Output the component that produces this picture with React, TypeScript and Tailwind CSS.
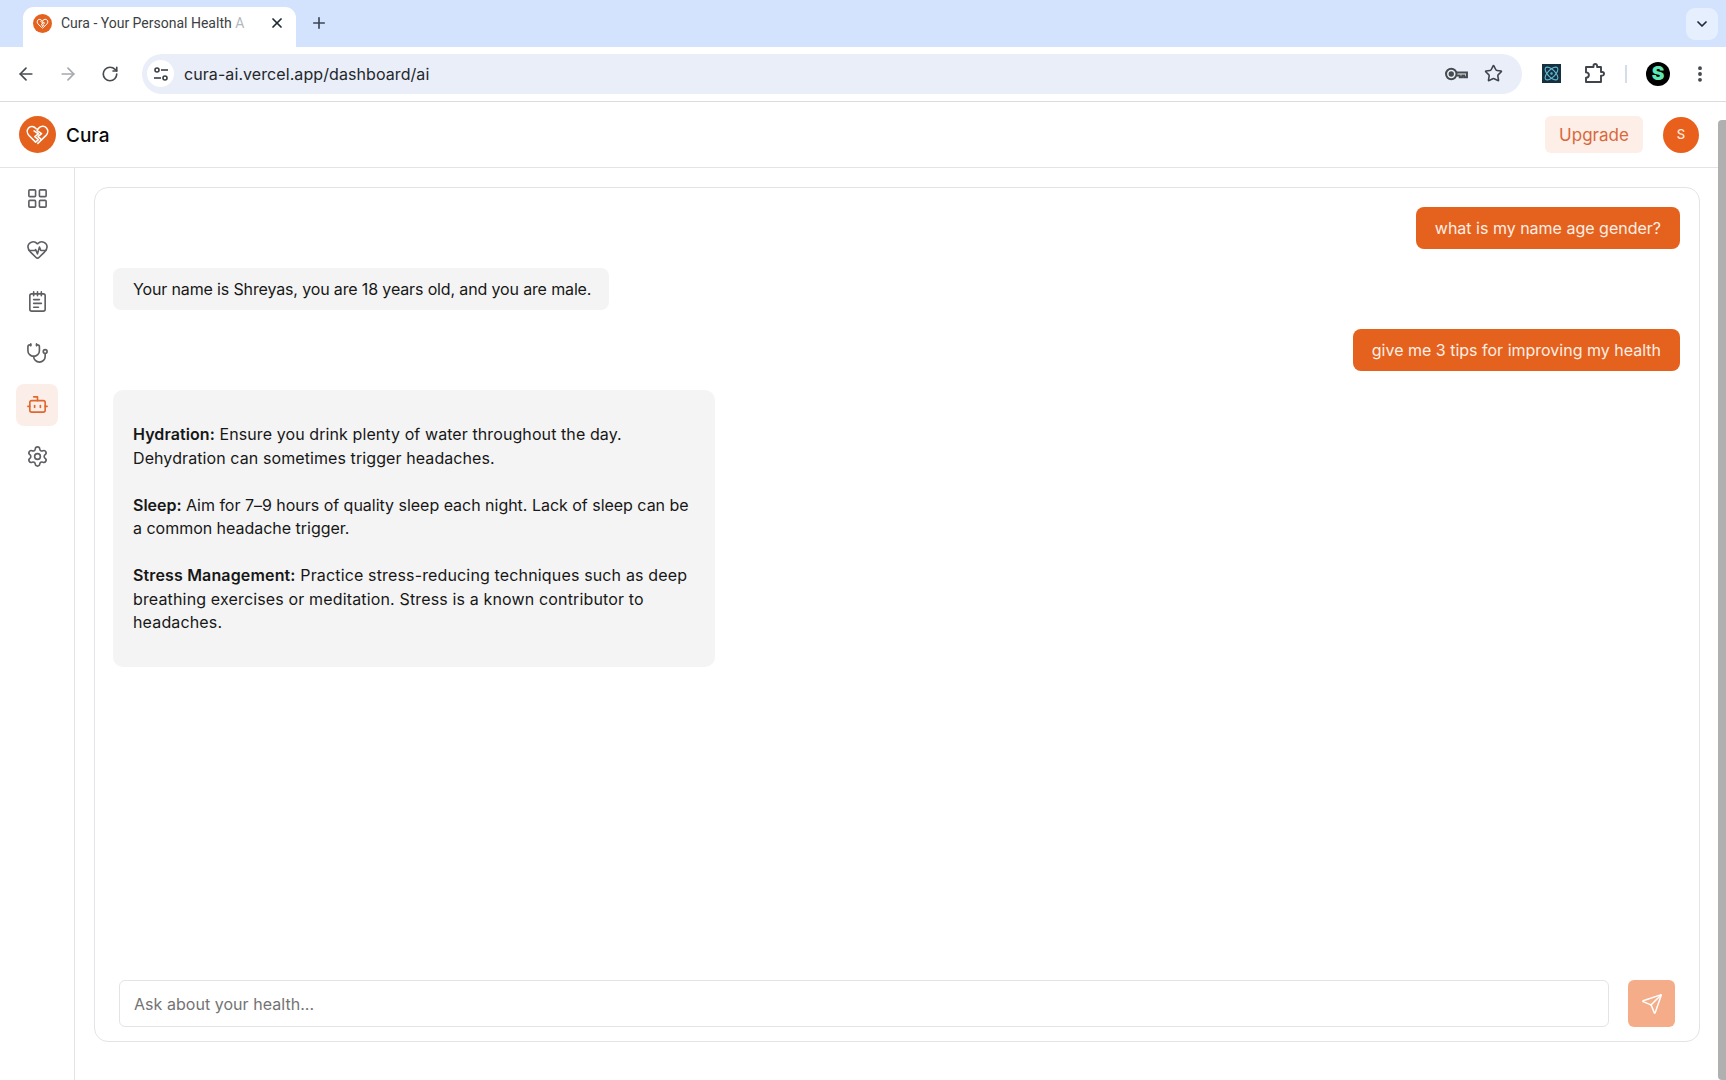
import {
  ArrowLeft,
  ArrowRight,
  Atom,
  Bot,
  ChevronDown,
  EllipsisVertical,
  HeartPulse,
  LayoutGrid,
  NotepadText,
  Plus,
  RotateCw,
  Send,
  Settings,
  Star,
  Stethoscope,
  X,
} from "lucide-react"

const navItems = [
  { icon: LayoutGrid },
  { icon: HeartPulse },
  { icon: NotepadText },
  { icon: Stethoscope },
  { icon: Bot, active: true },
  { icon: Settings },
]

// Heart split by a zigzag, same mark in the tab and the header
const CuraLogo = ({ size, width }: { size: number; width: number }) => (
  <svg
    width={size}
    height={size}
    viewBox="0 0 24 24"
    fill="none"
    stroke="white"
    strokeWidth={width}
    strokeLinecap="round"
    strokeLinejoin="round"
  >
    <path d="M10.800 6.600C8.800 3.900 5.300 3.500 3.400 5.700 1.500 7.900 2 11 3.800 12.900L10.200 19.300 12.800 16.900 9.400 14 12.900 11.300 8.700 8.500" />
    <path d="M12.800 6.200C14.900 3.600 18.700 3.500 20.600 5.700 22.500 7.900 22 11 20.200 12.900L12.300 20.500" />
    <path d="M12.800 6.200 11.600 8.300 15.900 11.200 12.500 14 15.200 16.500" />
  </svg>
)

const TuneIcon = () => (
  <svg width="16" height="16" viewBox="0 0 16 16" fill="none" stroke="#3c4043" strokeWidth="1.6">
    <circle cx="4" cy="4" r="2" />
    <path d="M8 4h7" />
    <path d="M1 12h7" />
    <circle cx="12" cy="12" r="2" />
  </svg>
)

const KeyIcon = () => (
  <svg width="23" height="14" viewBox="0 0 22 13" fill="none" stroke="#474b50" strokeWidth="1.9">
    <circle cx="6" cy="6.500" r="5" />
    <circle cx="6" cy="6.500" r="1.600" fill="#474b50" />
    <path d="M11 5h10v4.500h-2.500V8h-2v1.500h-2.400V8H11" />
  </svg>
)

const ExtensionIcon = () => (
  <svg width="21" height="21" viewBox="0 0 21 21" fill="none" stroke="#3f444a" strokeWidth="1.9" strokeLinejoin="round">
    <path d="M2 4h7.500V2.800a1.800 1.800 0 0 1 3.600 0V4H17v5h1.200a1.800 1.800 0 0 1 0 3.600H17V19H2v-4.200c1.700 0 2.900-1.100 2.900-2.700S3.700 9.400 2 9.400z" />
  </svg>
)

function BrowserChrome() {
  return (
    <div className="shrink-0 font-['Inter',sans-serif]">
      {/* Tab strip */}
      <div className="flex h-[47px] items-end bg-[#d3e3fd] pl-[23px] pr-[8px]">
        <div className="relative flex h-[40px] w-[273px] items-center rounded-t-[11px] bg-white pb-[8px] pl-[10px] pr-[11px]">
          <span className="flex h-[19px] w-[19px] shrink-0 items-center justify-center rounded-full bg-[#e5621e]">
            <CuraLogo size={13} width={1.800} />
          </span>
          <span className="ml-[9px] w-[190px] overflow-hidden whitespace-nowrap font-['Roboto',sans-serif] text-[14px] text-[#3c4043]">
            Cura - Your Personal Health <span className="text-[#b4b7bb]">A</span>
          </span>
          <X size={16} className="ml-auto shrink-0 text-[#1f2937]" strokeWidth={2.6} />
        </div>
        <Plus size={18} className="mb-[15px] ml-[14px] text-[#3c4654]" strokeWidth={2.2} />
        <div className="mb-[7px] ml-auto flex h-[32px] w-[32px] items-center justify-center rounded-[9px] bg-[#e6effd]">
          <ChevronDown size={16} className="text-[#1f2937]" strokeWidth={2.6} />
        </div>
      </div>
      {/* Toolbar */}
      <div className="flex h-[55px] items-center rounded-tr-[10px] border-b border-[#dadce0] bg-white pb-[1px]">
        <div className="flex w-[142px] items-center pl-[16px]">
          <ArrowLeft size={20} className="text-[#474b50]" />
          <ArrowRight size={20} className="ml-[22px] text-[#a5a8ac]" />
          <RotateCw size={18} className="ml-[23px] text-[#474b50]" strokeWidth={2.2} />
        </div>
        <div className="flex h-[40px] w-[1380px] items-center rounded-full bg-[#e9eef8] pl-[5px] pr-[19px]">
          <span className="flex h-[27px] w-[27px] items-center justify-center rounded-full bg-white">
            <TuneIcon />
          </span>
          <span className="ml-[10px] text-[16px] tracking-[0.08px] text-[#24272b]">
            cura-ai.vercel.app/dashboard/ai
          </span>
          <span className="ml-auto flex items-center gap-[16px]">
            <KeyIcon />
            <Star size={19} className="text-[#3f444a]" strokeWidth={2} />
          </span>
        </div>
        <span className="ml-[20px] flex h-[19px] w-[19px] items-center justify-center bg-[#17303f]">
          <Atom size={17} className="text-[#61bcd8]" strokeWidth={1.5} />
        </span>
        <span className="ml-[23px] flex">
          <ExtensionIcon />
        </span>
        <span className="ml-[20px] h-[18px] w-[2px] bg-[#d5dcea]" />
        <span className="ml-[19px] flex h-[24px] w-[24px] items-center justify-center rounded-full bg-black text-[19px] font-black leading-none text-[#5ee8b5]">
          S
        </span>
        <EllipsisVertical size={20} className="ml-[20px] text-[#3f444a]" strokeWidth={2.6} />
      </div>
    </div>
  )
}

function AppHeader() {
  return (
    <header className="flex h-[66px] shrink-0 items-center border-b border-[#e4e4e7] bg-white pl-[19px] pr-[27px]">
      <div className="flex h-[37px] w-[37px] items-center justify-center rounded-full bg-[#e5621e]">
        <CuraLogo size={25} width={1.500} />
      </div>
      <span className="ml-[10px] pt-[3px] text-[19px] font-medium text-[#0a0a0a]">Cura</span>
      <button className="ml-auto h-[37px] w-[98px] rounded-[6px] bg-[#fdeee8] pt-[2px] text-[17px] text-[#d9683a]">
        Upgrade
      </button>
      <div className="ml-[20px] flex h-[36px] w-[36px] items-center justify-center rounded-full bg-[#e8601c] text-[13px] font-medium text-[#fde7da]">
        S
      </div>
    </header>
  )
}

function Sidebar() {
  return (
    <aside className="flex w-[75px] shrink-0 flex-col items-center gap-[9.7px] border-r border-[#e4e4e7] bg-white pt-[9px]">
      {navItems.map(({ icon: Icon, active }, i) => (
        <div
          key={i}
          className={`flex h-[42px] w-[42px] items-center justify-center rounded-[8px] ${active ? "bg-[#fbeee8] text-[#e0672e]" : "text-[#5f5f63]"}`}
        >
          <Icon size={23} strokeWidth={1.7} />
        </div>
      ))}
    </aside>
  )
}

const UserBubble = ({ text }: { text: string }) => (
  <div className="self-end rounded-[8px] bg-[#e5621e] px-[19px] py-[9px] text-[16px] leading-[24px] text-[#fdeee4]">
    {text}
  </div>
)

function ChatCard() {
  return (
    <div className="flex h-[855px] flex-col rounded-[14px] border border-[#e4e4e7] bg-white pb-[14px] pl-[18px] pr-[19px] pt-[19px]">
      <div className="flex flex-1 flex-col gap-[19px] text-[#171717]">
        <UserBubble text="what is my name age gender?" />
        <div className="self-start rounded-[8px] bg-[#f4f4f4] pb-[9px] pl-[20px] pr-[18px] pt-[9px] text-[16px] leading-[24px] tracking-[-0.14px]">
          Your name is Shreyas, you are 18 years old, and you are male.
        </div>
        <UserBubble text="give me 3 tips for improving my health" />
        <div className="flex w-[602px] flex-col gap-[23.5px] self-start rounded-[10px] bg-[#f4f4f4] pb-[32px] pl-[20px] pr-[18px] pt-[33px] text-[16px] leading-[23.5px]">
          <p className="tracking-[0.09px]">
            <b className="font-semibold">Hydration:</b> Ensure you drink plenty of water throughout the day.
            <br />
            Dehydration can sometimes trigger headaches.
          </p>
          <p className="tracking-[-0.02px]">
            <b className="font-semibold">Sleep:</b> Aim for 7–9 hours of quality sleep each night. Lack of sleep can be
            <br />
            a common headache trigger.
          </p>
          <p className="tracking-[0.15px]">
            <b className="font-semibold">Stress Management:</b> Practice stress-reducing techniques such as deep
            <br />
            breathing exercises or meditation. Stress is a known contributor to
            <br />
            headaches.
          </p>
        </div>
      </div>
      <div className="flex items-center gap-[19px] pl-[6px] pr-[5px]">
        <div className="flex h-[47px] flex-1 items-center rounded-[6px] border border-[#e4e4e7] px-[14px] text-[16px] tracking-[0.04px] text-[#737373]">
          Ask about your health...
        </div>
        <button className="flex h-[47px] w-[47px] items-center justify-center rounded-[6px] bg-[#f4ad88]">
          <Send size={22} color="white" strokeWidth={1.6} />
        </button>
      </div>
    </div>
  )
}

export default function App() {
  return (
    <div className="relative flex h-[1080px] flex-col overflow-hidden bg-white font-['Inter',sans-serif]">
      <BrowserChrome />
      <AppHeader />
      <div className="flex min-h-0 flex-1">
        <Sidebar />
        <main className="flex-1 pl-[19px] pr-[26px] pt-[19px]">
          <ChatCard />
        </main>
      </div>
      {/* Page scrollbar */}
      <div className="absolute bottom-0 right-0 top-[120px] w-[8px] rounded-l-[4px] bg-[#b0b0b0]" />
    </div>
  )
}
